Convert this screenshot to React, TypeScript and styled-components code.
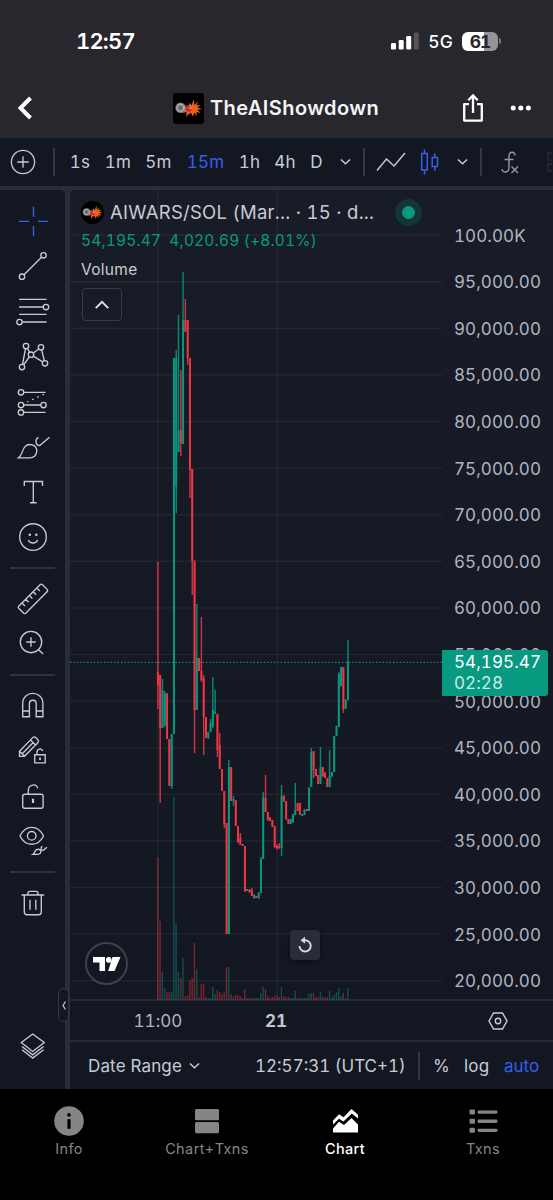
import React from "react";
import styled, { createGlobalStyle } from "styled-components";

const GlobalStyle = createGlobalStyle`
  * { box-sizing: border-box; }
  body { margin: 0; background: #000; font-family: Inter, "Liberation Sans", sans-serif; }
`;

const GREEN = "#089981";
const RED = "#f23645";
const BLUE = "#3560ea";
const TEXT = "#c9cbd3";

const Screen = styled.div`
  width: 553px;
  height: 1200px;
  display: flex;
  flex-direction: column;
  overflow: hidden;
  background: #000;
  color: ${TEXT};
`;

const Label = styled.span<{ $size: number; $spacing?: number; $weight?: number; $color?: string; $drop?: number }>`
  padding-top: ${(p) => p.$drop ?? 2}px;
  font-size: ${(p) => p.$size}px;
  letter-spacing: ${(p) => p.$spacing ?? 0}px;
  font-weight: ${(p) => p.$weight ?? 400};
  font-variant-numeric: tabular-nums;
  color: ${(p) => p.$color ?? TEXT};
  line-height: 1.2;
  white-space: nowrap;
`;

/* ---------- phone status bar and page header ---------- */

const Top = styled.header`
  height: 138px;
  flex: none;
  background: #28272d;
`;

const StatusBar = styled.div`
  height: 78px;
  padding: 4px 52px 0 76px;
  display: flex;
  align-items: center;
  justify-content: space-between;
`;

const StatusIcons = styled.div`
  display: flex;
  align-items: center;
  gap: 9px;
`;

const Battery = styled.div`
  width: 36px;
  height: 19px;
  border-radius: 6px;
  display: flex;
  align-items: center;
  justify-content: center;
  background: linear-gradient(90deg, #fff 0 62%, #949398 62%);
`;

const BatteryTip = styled.div`
  width: 2px;
  height: 6px;
  margin-left: -8px;
  border-radius: 0 2px 2px 0;
  background: #77767b;
`;

const TitleBar = styled.div`
  height: 60px;
  padding: 0 21px 0 17px;
  display: flex;
  align-items: center;
`;

const Title = styled.div`
  flex: 1;
  display: flex;
  align-items: center;
  padding-left: 139px;
  gap: 6px;
`;

const Avatar = styled.div<{ $size: number; $round?: boolean }>`
  width: ${(p) => p.$size}px;
  height: ${(p) => p.$size}px;
  flex: none;
  border-radius: ${(p) => (p.$round ? "50%" : "3px")};
  overflow: hidden;
  background: #000;
  display: flex;
`;

/* ---------- interval toolbar ---------- */

const Toolbar = styled.div`
  height: 52px;
  flex: none;
  border-bottom: 4px solid #2a2d38;
  background: #131722;
  display: flex;
  align-items: center;
`;

const ToolCell = styled.div<{ $w: number }>`
  width: ${(p) => p.$w}px;
  flex: none;
  display: flex;
  align-items: center;
  justify-content: center;
`;

const VRule = styled.div`
  width: 1.5px;
  height: 28px;
  flex: none;
  background: #353843;
`;

/* ---------- body ---------- */

const Body = styled.div`
  height: 899px;
  flex: none;
  display: flex;
  background: #2a2d38;
  position: relative;
`;

const SideTools = styled.nav`
  width: 65px;
  flex: none;
  background: #131722;
  border-radius: 0 5px 0 0;
  padding: 9px 0 20px;
  display: flex;
  flex-direction: column;
`;

const SideGap = styled.div`
  flex: 1;
`;

const SideRule = styled.div`
  height: 17px;
  display: flex;
  align-items: center;
  &::before {
    content: "";
    width: 45px;
    height: 2px;
    margin-left: 10px;
    background: #30333e;
  }
`;

const CollapseHandle = styled.div`
  position: absolute;
  left: 58px;
  top: 798px;
  width: 11px;
  height: 34px;
  border: 1.5px solid #363944;
  border-radius: 5px;
  background: #131722;
  display: flex;
  align-items: center;
  justify-content: center;
`;

const ChartColumn = styled.main`
  flex: 1;
  margin-left: 5px;
  background: #131722;
  border-radius: 5px 0 0 0;
  display: flex;
  flex-direction: column;
`;

const ChartRow = styled.div`
  height: 811px;
  flex: none;
  display: flex;
  border-bottom: 2px solid #262934;
  border-radius: 5px 0 0 0;
  background: linear-gradient(#181c27, #131722);
`;

const Pane = styled.section`
  width: 372px;
  flex: none;
  position: relative;
`;

const Plot = styled.svg`
  position: absolute;
  left: 0;
  top: 0;
`;

const Legend = styled.div`
  position: relative;
  padding: 8px 0 0 11px;
  display: flex;
  flex-direction: column;
  align-items: flex-start;
`;

const LegendRow = styled.div<{ $h: number; $gap?: number }>`
  height: ${(p) => p.$h}px;
  display: flex;
  align-items: center;
  gap: ${(p) => p.$gap ?? 0}px;
`;

const LegendTitle = styled.div`
  width: 279px;
  flex: none;
  display: flex;
`;

const LiveDot = styled.div`
  width: 27px;
  height: 27px;
  border-radius: 50%;
  border: 7px solid #153437;
  background: ${GREEN};
`;

const FoldButton = styled.button`
  width: 40px;
  height: 33px;
  margin: 5px 0 0 1px;
  padding: 0;
  border: 1.5px solid #383b46;
  border-radius: 4px;
  background: transparent;
  display: flex;
  align-items: center;
  justify-content: center;
`;

const ChartLogo = styled.div`
  position: absolute;
  left: 15px;
  top: 752px;
  width: 43px;
  height: 43px;
  border: 2px solid #3e414c;
  border-radius: 50%;
  background: #131722;
  display: flex;
  align-items: center;
  justify-content: center;
`;

const ResetButton = styled.button`
  position: absolute;
  left: 220px;
  top: 740px;
  width: 30px;
  height: 30px;
  padding: 0;
  border: 0;
  border-radius: 4px;
  background: #2a2d38;
  box-shadow: 0 1px 4px #0008;
  display: flex;
  align-items: center;
  justify-content: center;
`;

const PriceAxis = styled.aside`
  flex: 1;
  position: relative;
  padding: 22px 0 0 12px;
  display: flex;
  flex-direction: column;
`;

const PriceTick = styled.div`
  height: 46.6px;
  flex: none;
  display: flex;
  align-items: center;
`;

const LastPrice = styled.div`
  position: absolute;
  left: 0;
  top: 460px;
  width: 106px;
  height: 46px;
  padding: 0 0 1px 12px;
  border-radius: 0 3px 3px 0;
  background: ${GREEN};
  display: flex;
  flex-direction: column;
  justify-content: center;
`;

const TimeAxis = styled.div`
  height: 41px;
  flex: none;
  border-bottom: 2px solid #262934;
  display: flex;
  align-items: center;
`;

const TimeCell = styled.div<{ $w: number; $left?: number }>`
  width: ${(p) => p.$w}px;
  margin-left: ${(p) => p.$left ?? 0}px;
  flex: none;
  display: flex;
  justify-content: center;
`;

const RangeBar = styled.div`
  flex: 1;
  padding-left: 18px;
  display: flex;
  align-items: center;
`;

const RangeItem = styled.div<{ $w: number }>`
  width: ${(p) => p.$w}px;
  flex: none;
  display: flex;
  align-items: center;
  gap: 7px;
`;

/* ---------- bottom tabs ---------- */

const Tabs = styled.nav`
  flex: 1;
  background: #000;
  display: flex;
  padding: 15px 1px 0 0;
`;

const Tab = styled.div`
  flex: 1;
  display: flex;
  flex-direction: column;
  align-items: center;
  gap: 2px;
`;

/* ---------- drawings ---------- */

const Art = () => (
  <svg width="100%" height="100%" viewBox="0 0 30 30">
    <path
      d="M11 14l4-.5 1-4 2 2.500 2-6 .8 5.500 3.700-3.500-1.800 4 4-.7-3 2.700 4.500 1.500-4.500.8 3 3.200-4-1.400.6 4.200-2.600-3.200-1.500 3.600-1.700-3.600-3 2.200 1.200-3-2.700 5.500 0-5.500-3.500 1z"
      fill="#e8611f"
    />
    <path d="M11 12.500l4-1 1 2.500 2.500 0-1 3.500-4 1z" fill="#c42a24" />
    <path d="M13 13.500l3 1 3-1-2 2z" fill="#f0cfcf" />
    <circle cx="7.300" cy="14.300" r="5" fill="#7f8484" />
    <circle cx="7.300" cy="14.300" r="3.400" fill="none" stroke="#dcdcdc" strokeWidth="0.900" strokeDasharray="2 1.200" />
    <path d="M5.800 12.800l3 3M8.800 12.800l-3 3" stroke="#3a3a3a" strokeWidth="0.800" />
  </svg>
);

const Chevron = ({ w = 12, color = TEXT, up = false, sw = 1.6 }: { w?: number; color?: string; up?: boolean; sw?: number }) => (
  <svg width={w} height={w / 2 + 2} viewBox="0 0 12 8" fill="none" stroke={color} strokeWidth={sw}>
    <path d={up ? "M1 6.5L6 1.5 11 6.5" : "M1 1.5L6 6.2 11 1.5"} />
  </svg>
);

const IconSvg = styled.svg`
  flex: none;
`;

const ToolIcon = ({ children, color = TEXT }: { children: React.ReactNode; color?: string }) => (
  <IconSvg width="64" height="45" viewBox="0 0 64 45" fill="none" stroke={color} strokeWidth="1.35">
    {children}
  </IconSvg>
);

const MoreIcon = styled.svg`
  margin-left: 26px;
`;

const Dots = ({ at, r = 2.7 }: { at: number[][]; r?: number }) => (
  <>
    {at.map(([x, y]) => (
      <circle key={`${x}-${y}`} cx={x} cy={y} r={r} fill="#131722" />
    ))}
  </>
);

/* Candles: high, low, body top, body bottom, direction (1 up, 0 down), top of the volume bar. */
type Candle = [number, number, number, number, 0 | 1, number];
const candles: Candle[] = [
  [562, 709, 672, 685, 0, 857], [675, 803, 675, 728, 0, 921], [679, 728, 690, 728, 1, 972],
  [691, 727, 693, 725, 1, 988], [693, 739, 694, 739, 0, 992], [739, 786, 739, 786, 0, 992],
  [734, 789, 734, 786, 1, 992], [358, 734, 358, 734, 1, 797], [350, 513, 358, 487, 1, 923],
  [315, 452, 430, 452, 1, 972], [370, 456, 430, 443, 0, 978], [272, 444, 320, 444, 1, 958],
  [299, 332, 320, 332, 0, 996], [320, 365, 320, 358, 0, 995], [358, 498, 358, 470, 0, 980],
  [469, 595, 469, 561, 0, 978], [560, 753, 562, 710, 0, 943], [604, 710, 658, 710, 1, 969],
  [658, 671, 658, 671, 0, 997], [617, 682, 671, 680, 0, 984], [675, 755, 678, 717, 0, 984],
  [717, 738, 717, 738, 0, 997], [732, 739, 732, 738, 1, 998], [719, 732, 723, 732, 1, 998],
  [677, 728, 710, 726, 1, 987], [690, 714, 712, 714, 1, 994], [714, 757, 714, 750, 0, 990],
  [733, 769, 745, 769, 0, 992], [769, 791, 769, 791, 0, 994], [791, 828, 791, 824, 0, 992],
  [823, 934, 823, 934, 0, 967], [760, 934, 767, 934, 1, 967], [767, 801, 767, 801, 0, 994],
  [796, 806, 799, 801, 1, 996], [800, 826, 800, 826, 0, 995], [826, 843, 826, 842, 0, 995],
  [833, 845, 838, 845, 0, 996], [844, 846, 844, 846, 0, 998], [846, 892, 846, 891, 0, 989],
  [889, 891, 889, 891, 1, 998], [889, 893, 890, 892, 0, 998], [888, 896, 890, 896, 0, 998],
  [894, 899, 895, 898, 1, 998], [896, 898, 896, 898, 0, 998], [892, 899, 893, 898, 1, 998],
  [857, 893, 859, 893, 1, 993], [792, 859, 797, 859, 1, 987], [775, 812, 798, 812, 0, 989],
  [812, 821, 812, 820, 0, 996], [817, 821, 818, 821, 0, 998], [820, 827, 820, 827, 0, 997],
  [826, 848, 826, 847, 0, 996], [844, 850, 846, 848, 0, 995], [843, 849, 846, 848, 0, 997],
  [785, 856, 796, 848, 1, 987], [795, 802, 796, 801, 0, 996], [801, 820, 801, 819, 0, 997],
  [819, 824, 819, 824, 0, 997], [819, 824, 819, 824, 1, 998], [814, 823, 814, 822, 1, 998],
  [783, 815, 810, 815, 1, 991], [803, 811, 803, 811, 0, 998], [803, 815, 803, 815, 0, 998],
  [814, 816, 814, 816, 1, 998], [809, 815, 810, 815, 1, 998], [809, 811, 809, 811, 0, 998],
  [787, 811, 788, 811, 1, 994], [748, 787, 752, 787, 1, 993], [751, 778, 751, 770, 0, 993],
  [769, 776, 769, 776, 0, 997], [775, 784, 775, 784, 0, 997], [747, 784, 767, 784, 1, 992],
  [767, 777, 767, 776, 0, 997], [772, 778, 773, 778, 0, 997], [778, 787, 778, 787, 0, 997],
  [750, 787, 776, 787, 1, 991], [772, 777, 772, 776, 1, 997], [736, 772, 736, 772, 1, 995],
  [726, 736, 726, 736, 1, 992], [672, 727, 674, 727, 1, 988], [667, 686, 667, 686, 1, 996],
  [667, 713, 667, 709, 0, 993], [699, 709, 700, 709, 1, 998], [640, 700, 662, 700, 1, 988],
];
const STEP = 2.29;

const prices = ["100.00K"].concat(
  Array.from({ length: 16 }, (_, i) => `${95 - i * 5},000.00`)
);

const PricePlot = () => (
  <Plot width="372" height="810" viewBox="70 190 372 810">
    {prices.map((p, i) => (
      <rect key={p} x="70" y={234.5 + i * 46.6} width="372" height="1.2" fill="#f0f3fa" opacity="0.07" />
    ))}
    <rect x="157.3" y="190" width="1.2" height="810" fill="#f0f3fa" opacity="0.07" />
    <rect x="276.6" y="190" width="1.2" height="810" fill="#f0f3fa" opacity="0.07" />
    {candles.map(([, , , , up, v], i) => (
      <rect key={i} x={157.1 + i * STEP} y={v} width="1.4" height={1000 - v} fill={up ? GREEN : RED} opacity="0.45" />
    ))}
    {candles.map(([h, l, t, b, up], i) => {
      const x = 157.9 + i * STEP;
      return (
        <g key={i} fill={up ? GREEN : RED}>
          <rect x={x - 0.7} y={h} width="1.4" height={l - h} opacity="0.88" />
          <rect x={x - 1} y={t} width="2" height={b - t} opacity="0.95" />
        </g>
      );
    })}
    <path d="M70 662.3H442" stroke={GREEN} strokeWidth="1.2" strokeDasharray="1.3 2.1" />
  </Plot>
);

const intervals: [string, number][] = [
  ["1s", 36], ["1m", 40], ["5m", 41], ["15m", 53], ["1h", 35], ["4h", 36], ["D", 27],
];

export default function App() {
  return (
    <Screen>
      <GlobalStyle />
      <Top>
        <StatusBar>
          <Label $size={22} $weight={600} $color="#fff" $spacing={-0.8} $drop={0}>12:57</Label>
          <StatusIcons>
            <svg width="28" height="18" viewBox="0 0 28 18" fill="#fff">
              <rect x="0" y="11" width="5" height="6.5" rx="1.3" />
              <rect x="7.7" y="8" width="5" height="9.5" rx="1.3" />
              <rect x="15.2" y="4" width="5" height="13.5" rx="1.3" />
              <rect x="22.8" y="0.5" width="5" height="17" rx="1.3" fill="#55545a" />
            </svg>
            <Label $size={17.5} $weight={500} $color="#fff" $drop={0} $spacing={0.2}>5G</Label>
            <Battery>
              <Label $size={17.5} $weight={700} $color="#28272d" $spacing={-1} $drop={0}>61</Label>
            </Battery>
            <BatteryTip />
          </StatusIcons>
        </StatusBar>
        <TitleBar>
          <svg width="17" height="24" viewBox="0 0 17 24" fill="none" stroke="#fff" strokeWidth="4">
            <path d="M13.5 2L3.5 12l10 10" />
          </svg>
          <Title>
            <Avatar $size={31}><Art /></Avatar>
            <Label $size={20} $weight={600} $color="#f4f4f6" $spacing={0.42} $drop={0}>TheAIShowdown</Label>
          </Title>
          <svg width="22" height="30" viewBox="0 0 22 30" fill="none" stroke="#fff" strokeWidth="2.3">
            <path d="M7 11.2H2.2v16.4h17.6V11.2H15" strokeLinejoin="round" />
            <path d="M11 20V3M6.3 7.2L11 2.5l4.7 4.7" />
          </svg>
          <MoreIcon width="22" height="6" viewBox="0 0 22 6" fill="#fff">
            <circle cx="3.2" cy="3" r="2.5" /><circle cx="10.8" cy="3" r="2.5" /><circle cx="18.4" cy="3" r="2.5" />
          </MoreIcon>
        </TitleBar>
      </Top>

      <Toolbar>
        <ToolCell $w={46}>
          <svg width="26" height="26" viewBox="0 0 26 26" fill="none" stroke={TEXT} strokeWidth="1.3">
            <circle cx="13" cy="13" r="11.6" /><path d="M13 7.3v11.4M7.3 13h11.4" />
          </svg>
        </ToolCell>
        <ToolCell $w={16}><VRule /></ToolCell>
        {intervals.map(([name, w]) => (
          <ToolCell key={name} $w={w}>
            <Label $size={17} $spacing={0.2} $drop={1} $color={name === "15m" ? BLUE : TEXT}>{name}</Label>
          </ToolCell>
        ))}
        <ToolCell $w={30}><Chevron w={11} /></ToolCell>
        <ToolCell $w={8}><VRule /></ToolCell>
        <ToolCell $w={46}>
          <svg width="30" height="20" viewBox="0 0 30 20" fill="none" stroke={TEXT} strokeWidth="1.4">
            <path d="M1 18.5L10.5 7l7.5 7L29 1" />
          </svg>
        </ToolCell>
        <ToolCell $w={31}>
          <svg width="20" height="26" viewBox="0 0 20 26" fill="none" stroke={BLUE} strokeWidth="1.5">
            <path d="M1.7 4.5h5.6v16.5H1.7zM12.2 8.5h5.3v9h-5.3zM4.5 0.5v4M4.5 21v4.5M14.8 4.5v4M14.8 17.5v4.3" />
          </svg>
        </ToolCell>
        <ToolCell $w={34}><Chevron w={11} /></ToolCell>
        <ToolCell $w={4}><VRule /></ToolCell>
        <ToolCell $w={53}>
          <svg width="18" height="23" viewBox="0 0 18 23" fill="none" stroke="#969aa3" strokeWidth="1.4">
            <path d="M14 4.5C14 .2 8.300 0 8 5v11.500C7.800 22.500 1 22 1 18M3.500 8.500h9M10.500 15.500l6.500 6.500M17 15.500L10.500 22" />
          </svg>
        </ToolCell>
        <svg width="16" height="20" viewBox="0 0 16 20" fill="none" stroke="#282c37" strokeWidth="1.4">
          <path d="M17 1h-5v7h5M17 12h-5v7h5" />
        </svg>
      </Toolbar>

      <Body>
        <SideTools>
          <ToolIcon color={BLUE}>
            <path d="M19 22.400h10M38 22.400h10M33.500 7.700v10M33.500 27v10" />
          </ToolIcon>
          <ToolIcon>
            <path d="M24 30.800L41.500 13.200" /><Dots at={[[22, 32.700], [43.500, 11.300]]} />
          </ToolIcon>
          <ToolIcon>
            <path d="M19 10.400h27.500M19 18h24.500M19 25.400h27.500M22.500 33h24" /><Dots at={[[46, 18], [19.500, 33]]} />
          </ToolIcon>
          <ToolIcon>
            <path d="M22 33l4-21 5 8.700zM31 20.700l10-7.400 4 16z" />
            <Dots at={[[22, 33], [26, 12], [31, 20.700], [41, 13.300], [45, 29.300]]} />
          </ToolIcon>
          <ToolIcon>
            <path d="M21 13.300h24.500M21 26h22M21 33.400h24.500" /><path d="M27 23L45 14.800" strokeDasharray="1.500 4.200" />
            <Dots at={[[21, 13.300], [21, 26], [43.500, 26], [21, 33.400]]} />
          </ToolIcon>
          <ToolIcon>
            <path d="M18.500 33.800c4-2.800 3.500-8 6.500-11.200 4-4.200 11.800-1.600 11.800 4.500 0 4-3 6.700-7 6.700zM38.500 13.300c-4 2-3 8.300 1.200 8.300L49.500 13.300" />
          </ToolIcon>
          <ToolIcon><path d="M24.300 17v-4.500h18.200V17M33.300 12.500v21.200M30 33.700h6.600" /></ToolIcon>
          <ToolIcon>
            <circle cx="33" cy="23" r="13.300" />
            <path d="M28.300 26c1.600 4 7.800 4 9.400 0" />
            <g fill={TEXT} stroke="none"><circle cx="29.800" cy="20.800" r="1.300" /><circle cx="36.300" cy="20.800" r="1.300" /></g>
          </ToolIcon>
          <SideRule />
          <ToolIcon>
            <path d="M18.700 30.200L40.300 8.600q1-.9 2 0l5 5q.9 1 0 2L25.700 37.200q-1 .9-2 0l-5-5q-.9-1 0-2zM22 27l3 3M25.700 23.200l3 3M29.400 19.500l3 3M33.100 15.800l3 3M36.800 12.100l3 3" />
          </ToolIcon>
          <ToolIcon>
            <circle cx="31" cy="21" r="10.700" /><path d="M38.700 28.700l4.300 4.200M26.300 21h9.400M31 16.300v9.400" />
          </ToolIcon>
          <SideRule />
          <ToolIcon>
            <path d="M22.700 33.700V20.500c0-13.500 20.200-13.500 20.200 0v13.200h-6.700V20.500c0-4.400-6.800-4.400-6.800 0v13.200zM22.700 28h6.700M36.200 28h6.700" />
          </ToolIcon>
          <ToolIcon>
            <path d="M19.500 28.300v-5L32.700 9.600q1.500-1.500 3 0l2.300 2.300q1.200 1.300 0 2.600L24.500 28.300zM19.500 23.300l5 5M30.500 12l5 5M22 26L33.500 14.200" />
            <path d="M34.700 26.700h10.500v8.200H34.700zM37 26.700v-2.500c0-4 5-4 5.600-1.200" /><path d="M40 29.500v2.500" strokeWidth="1.800" />
          </ToolIcon>
          <ToolIcon>
            <rect x="22.700" y="21.200" width="20.400" height="14" rx="2" /><path d="M28.300 21v-3.500c0-6.500 8.200-7.300 9.300-2.200" />
            <path d="M33 25.700v4.300" strokeWidth="2.200" />
          </ToolIcon>
          <ToolIcon>
            <path d="M20 18c5.500-11.500 18-11.500 23.500 0-5.500 11-18 11-23.500 0z" /><circle cx="31.700" cy="17.800" r="4.300" />
            <path d="M33 36.400c2-1.200 1.500-3.500 3.500-4.700 3-1.500 5.500 1.200 4 3.300-.8 1.200-2 1.400-3 1.400zM42.500 28.300c-2.500 1-1.500 4.300.8 4L47 29.200" />
          </ToolIcon>
          <SideRule />
          <ToolIcon>
            <path d="M21.500 15h22.700M28 15v-2q0-1.700 1.700-1.700h6.600q1.700 0 1.700 1.700v2M24.300 15v17q0 2.700 2.700 2.700h11.600q2.700 0 2.700-2.700V15M30 19.700v10M35.800 19.700v10" />
          </ToolIcon>
          <SideGap />
          <ToolIcon>
            <path d="M21.300 18.500L32.700 10l11.600 8.500-11.600 9z" />
            <path d="M22 22.500l10.700 8.300 10.900-8.300M22 25.800l10.700 8.300 10.900-8.300" />
          </ToolIcon>
        </SideTools>

        <ChartColumn>
          <ChartRow>
            <Pane>
              <PricePlot />
              <Legend>
                <LegendRow $h={28} $gap={6}>
                  <Avatar $size={23} $round><Art /></Avatar>
                  <LegendTitle>
                    <Label $size={18.5} $spacing={0.26} $drop={0}>AIWARS/SOL (Mar... · 15 · d...</Label>
                  </LegendTitle>
                  <LiveDot />
                </LegendRow>
                <LegendRow $h={29} $gap={8}>
                  <Label $size={15.5} $spacing={0.18} $drop={1} $color={GREEN}>54,195.47</Label>
                  <Label $size={15.5} $spacing={0.18} $drop={1} $color={GREEN}>4,020.69 (+8.01%)</Label>
                </LegendRow>
                <LegendRow $h={28}>
                  <Label $size={15.5} $spacing={0.3}>Volume</Label>
                </LegendRow>
                <FoldButton><Chevron w={16} up color="#e4e5ea" sw={1.5} /></FoldButton>
              </Legend>
              <ChartLogo>
                <svg width="28" height="14" viewBox="0 0 28 14" fill="#fff">
                  <path d="M0 0h12v14H6.500V5.500H0zM19.500 0H27.500L21.500 14h-6.300z" /><circle cx="15.700" cy="2.900" r="2.800" />
                </svg>
              </ChartLogo>
              <ResetButton>
                <svg width="18" height="18" viewBox="0 0 18 18" fill="none" stroke="#d6d8df" strokeWidth="1.900">
                  <path d="M8 4.300h1.500a5.600 5.600 0 1 1-6 5.700" /><path d="M9 .8v7L4.500 4.300z" fill="#d6d8df" stroke="none" />
                </svg>
              </ResetButton>
            </Pane>
            <PriceAxis>
              {prices.map((p) => (
                <PriceTick key={p}>
                  <Label $size={17} $spacing={0.08} $drop={1} $color="#b2b5be">{p}</Label>
                </PriceTick>
              ))}
              <LastPrice>
                <Label $size={17} $spacing={0.08} $color="#fff" $drop={0}>54,195.47</Label>
                <Label $size={17} $spacing={0.08} $color="#c9ebe4" $drop={0}>02:28</Label>
              </LastPrice>
            </PriceAxis>
          </ChartRow>
          <TimeAxis>
            <TimeCell $w={60} $left={58}><Label $size={17} $spacing={0.05} $color="#b2b5be">11:00</Label></TimeCell>
            <TimeCell $w={40} $left={68}><Label $size={17} $weight={700} $spacing={0} $color="#c4c6ce">21</Label></TimeCell>
            <TimeCell $w={20} $left={192}>
              <IconSvg width="20" height="18" viewBox="0 0 20 18" fill="none" stroke={TEXT} strokeWidth="1.400">
                <path d="M5.500 1h9L19 9l-4.500 8h-9L1 9z" /><circle cx="10" cy="9" r="2.700" />
              </IconSvg>
            </TimeCell>
          </TimeAxis>
          <RangeBar>
            <RangeItem $w={167}><Label $size={17} $spacing={0.15}>Date Range</Label><Chevron w={11} /></RangeItem>
            <RangeItem $w={163}><Label $size={17} $spacing={0}>12:57:31 (UTC+1)</Label></RangeItem>
            <RangeItem $w={15}><VRule /></RangeItem>
            <RangeItem $w={31}><Label $size={17}>%</Label></RangeItem>
            <RangeItem $w={40}><Label $size={17} $spacing={0.2}>log</Label></RangeItem>
            <Label $size={17} $color={BLUE}>auto</Label>
          </RangeBar>
        </ChartColumn>
        <CollapseHandle>
          <svg width="4" height="9" viewBox="0 0 4 9" fill="none" stroke={TEXT} strokeWidth="1.200"><path d="M3.500 .5L1 4.500l2.500 4" /></svg>
        </CollapseHandle>
      </Body>

      <Tabs>
        <Tab>
          <svg width="32" height="34" viewBox="0 0 32 34">
            <circle cx="16" cy="17" r="14.800" fill="#858585" />
            <circle cx="16" cy="10.900" r="1.800" /><rect x="14.400" y="15.200" width="3.200" height="9.600" />
          </svg>
          <Label $size={14.5} $spacing={0.4} $drop={0} $color="#858585">Info</Label>
        </Tab>
        <Tab>
          <svg width="32" height="34" viewBox="0 0 32 34" fill="#858585">
            <rect x="4" y="5" width="24" height="11.300" rx="1.500" /><rect x="4" y="18" width="24" height="11.300" rx="1.500" />
          </svg>
          <Label $size={14.5} $spacing={0.4} $drop={0} $color="#858585">Chart+Txns</Label>
        </Tab>
        <Tab>
          <svg width="32" height="34" viewBox="0 0 32 34" fill="#fff">
            <path d="M4 16.500L10 10.200l4.500 3L22.500 5 29 10.800V14.500L22.800 9.500 14.500 17.500 10 14.800 4 20.500z" />
            <path d="M4 28.500V24.500L10 17.800l5 3.300 7.500-7L29 20.500v8z" />
          </svg>
          <Label $size={14.5} $spacing={0.3} $drop={0} $weight={500} $color="#fff">Chart</Label>
        </Tab>
        <Tab>
          <svg width="32" height="34" viewBox="0 0 32 34" fill="#858585">
            {[5.500, 14.700, 23.800].map((y) => (
              <g key={y}><rect x="2.500" y={y} width="5.500" height="5" rx="1" /><rect x="10.500" y={y + 0.900} width="20" height="3.300" rx="1.400" /></g>
            ))}
          </svg>
          <Label $size={14.5} $spacing={0.4} $drop={0} $color="#858585">Txns</Label>
        </Tab>
      </Tabs>
    </Screen>
  );
}
